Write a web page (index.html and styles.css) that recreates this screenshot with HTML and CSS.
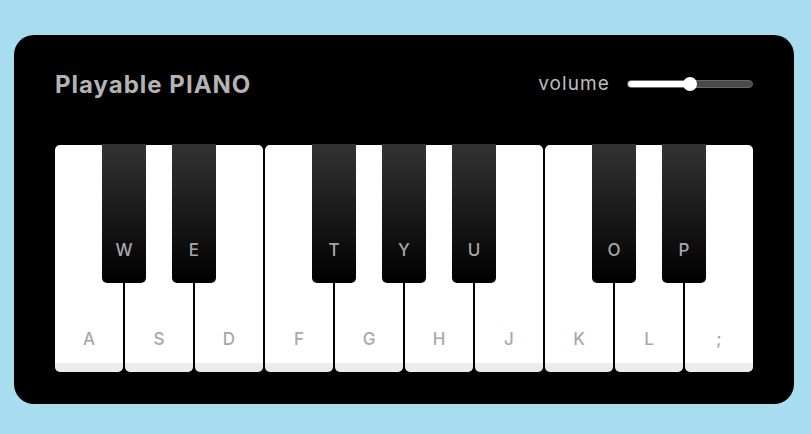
FILE: index.html
```html
<!DOCTYPE html>
<html lang="en">
<head>
<meta charset="utf-8">
<title>Playable Piano</title>
<link rel="stylesheet" href="styles.css">
</head>
<body>
<div class="wrapper">
  <header class="header">
    <h2 class="title">Playable PIANO</h2>
    <div class="column volume-slider">
      <span class="volume-label">volume</span>
      <input class="slider" type="range" min="0" max="1" value="0.5" step="any" style="background: linear-gradient(to right, #fff 50%, #4a4a4a 50%);">
    </div>
  </header>
  <ul class="piano-keys">
    <li class="key white"><span>A</span></li>
    <li class="key black"><span>W</span></li>
    <li class="key white"><span>S</span></li>
    <li class="key black"><span>E</span></li>
    <li class="key white"><span>D</span></li>
    <li class="key white"><span>F</span></li>
    <li class="key black"><span>T</span></li>
    <li class="key white"><span>G</span></li>
    <li class="key black"><span>Y</span></li>
    <li class="key white"><span>H</span></li>
    <li class="key black"><span>U</span></li>
    <li class="key white"><span>J</span></li>
    <li class="key white"><span>K</span></li>
    <li class="key black"><span>O</span></li>
    <li class="key white"><span>L</span></li>
    <li class="key black"><span>P</span></li>
    <li class="key white"><span>;</span></li>
  </ul>
</div>
</body>
</html>
```

FILE: styles.css
```css
* {
  margin: 0;
  padding: 0;
  box-sizing: border-box;
}

body {
  background: #a8dcef;
  padding: 35px 0 0 14px;
  height: 434px;
  overflow: hidden;
  font-family: Inter, "Liberation Sans", sans-serif;
}

.wrapper {
  width: 780px;
  height: 369px;
  background: #000;
  border-radius: 20px;
  padding: 34px 40px 32px;
}

.header {
  height: 30px;
  display: flex;
  align-items: center;
  justify-content: space-between;
  padding-left: 1px;
}

.title {
  color: #b3b3b3;
  font-size: 24px;
  font-weight: 700;
  letter-spacing: 1px;
}

.volume-slider {
  display: flex;
  align-items: center;
  gap: 17px;
  padding-right: 1px;
}

.volume-label {
  color: #bdbdbd;
  font-size: 19px;
  font-weight: 400;
  letter-spacing: 1.1px;
  position: relative;
  top: -1px;
}

.slider {
  -webkit-appearance: none;
  appearance: none;
  width: 126px;
  height: 8px;
  border-radius: 5px;
  border: 1px solid #666;
  outline: none;
  cursor: pointer;
}

.slider::-webkit-slider-thumb {
  -webkit-appearance: none;
  appearance: none;
  width: 14px;
  height: 14px;
  border-radius: 50%;
  background: #fff;
  border: none;
}

.piano-keys {
  display: flex;
  list-style: none;
  margin-top: 46px;
  height: 227px;
}

.key {
  position: relative;
  display: flex;
  flex-direction: column;
  justify-content: flex-end;
  align-items: center;
  font-weight: 500;
  font-size: 17px;
  color: #a8a8a8;
  cursor: pointer;
  user-select: none;
}

.key.white {
  width: 68px;
  height: 227px;
  margin: 0 1px;
  background: #fff;
  border-radius: 5px;
  border-bottom: 9px solid #ececec;
  padding-bottom: 14px;
}

.key.black {
  width: 44px;
  height: 139px;
  margin: -1px -22px 0;
  z-index: 2;
  background: linear-gradient(#333, #000);
  border-radius: 0 0 5px 5px;
  padding-bottom: 23px;
}
```
